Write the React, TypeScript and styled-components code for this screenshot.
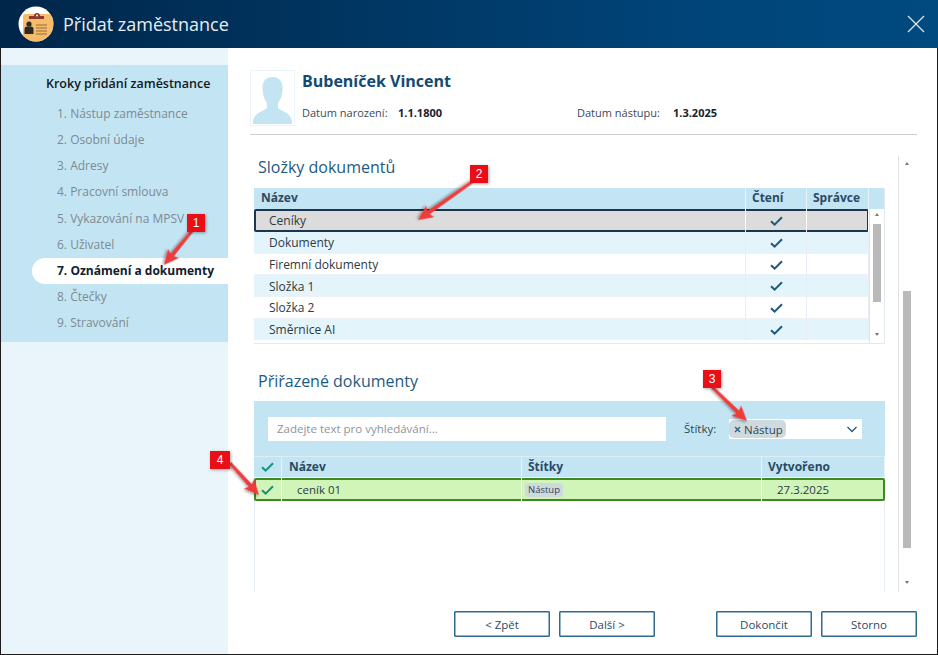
import React from "react";
import styled, { createGlobalStyle } from "styled-components";

const Global = createGlobalStyle`
  html, body { margin: 0; padding: 0; background: #fff; }
  body { font-family: "Open Sans", "Noto Sans", sans-serif; }
  * { box-sizing: border-box; }
`;

const Win = styled.div`
  position: relative;
  width: 938px;
  height: 655px;
  display: flex;
  flex-direction: column;
  background: #fff;
  overflow: hidden;
`;
const Header = styled.header`
  height: 48px;
  flex: none;
  display: flex;
  align-items: center;
  padding: 0 12px 0 18px;
  background: linear-gradient(90deg, #00264a 0%, #003560 35%, #00457a 75%, #004a80 100%);
`;
const Title = styled.h1`
  margin: 0 0 0 9px;
  flex: 1;
  font-size: 18px;
  font-weight: 400;
  color: #e6edf2;
`;
const Body = styled.div`
  flex: 1;
  display: flex;
  min-height: 0;
  border: solid #1c1c1c;
  border-width: 0 1px 1px 1px;
`;
const Sidebar = styled.aside`
  width: 227px;
  flex: none;
  padding-top: 17px;
  background: #eaf5fb;
`;
const StepPanel = styled.nav`
  height: 277px;
  padding-top: 10px;
  background: #c3e5f3;
`;
const StepHeading = styled.div`
  margin: 0 0 8px 45px;
  height: 18px;
  line-height: 18px;
  font-size: 12.5px;
  font-weight: 600;
  color: #111a22;
`;
const Step = styled.div<{ $active?: boolean }>`
  height: 26.15px;
  line-height: 26px;
  margin-left: 31px;
  padding-left: 25px;
  border-radius: 13px 0 0 13px;
  font-size: 12px;
  white-space: nowrap;
  font-weight: ${(p) => (p.$active ? 700 : 400)};
  color: ${(p) => (p.$active ? "#10202e" : "#7d8a92")};
  background: ${(p) => (p.$active ? "#fff" : "transparent")};
`;
const Main = styled.main`
  flex: 1;
  min-width: 0;
  display: flex;
  flex-direction: column;
  padding: 22px 20px 17px 22px;
`;
const Person = styled.section`
  height: 65px;
  flex: none;
  display: flex;
  gap: 7px;
  border-bottom: 1px solid #cfcfcf;
  padding-bottom: 9px;
`;
const Avatar = styled.div`
  width: 45px;
  height: 56px;
  border: 1px solid #eaf4fa;
  display: flex;
  align-items: flex-end;
  justify-content: center;
`;
const PersonInfo = styled.div`
  flex: 1;
  display: flex;
  flex-direction: column;
`;
const Name = styled.div`
  height: 22px;
  line-height: 22px;
  font-size: 16px;
  font-weight: 700;
  color: #124a73;
`;
const Dates = styled.div`
  margin-top: 11px;
  display: flex;
  height: 20px;
  line-height: 20px;
  font-size: 11px;
  color: #3c4a55;
`;
const DateGroup = styled.div<{ $w: number }>`
  width: ${(p) => p.$w}px;
  display: flex;
`;
const DateLabel = styled.span<{ $w: number }>`
  width: ${(p) => p.$w}px;
  flex: none;
`;
const DateValue = styled.b`
  font-weight: 700;
  color: #16222c;
`;
const Scroller = styled.div`
  flex: none;
  height: 436px;
  margin: 21px 0 0 4px;
  display: flex;
`;
const Content = styled.div`
  width: 631px;
  flex: none;
  display: flex;
  flex-direction: column;
`;
const SectionTitle = styled.h2<{ $top: number; $bottom: number }>`
  margin: ${(p) => p.$top}px 0 ${(p) => p.$bottom}px 4px;
  height: 22px;
  line-height: 22px;
  font-size: 16px;
  font-weight: 400;
  color: #1d5a82;
`;
const FolderTable = styled.div`
  height: 156px;
  flex: none;
  display: flex;
  flex-direction: column;
  border: solid #e3e9f0;
  border-width: 0 1px 1px 0;
`;
const FolderHead = styled.div`
  height: 21px;
  flex: none;
  display: grid;
  grid-template-columns: 492px 61px 62px 1fr;
  background: #c3e5f3;
  font-size: 12px;
  font-weight: 700;
  line-height: 20px;
  color: #2b4a64;
`;
const HeadCell = styled.div<{ $pad: number }>`
  padding-left: ${(p) => p.$pad}px;
  border-right: 1px solid #e6f3f9;
  white-space: nowrap;
`;
const FolderBody = styled.div`
  flex: 1;
  display: flex;
  min-height: 0;
`;
const FolderRows = styled.div`
  width: 615px;
  flex: none;
`;
const FolderRow = styled.div<{ $sel?: boolean; $alt?: boolean }>`
  height: ${(p) => (p.$sel ? 23 : 21.7)}px;
  display: grid;
  grid-template-columns: 492px 61px 62px;
  font-size: 12px;
  line-height: ${(p) => (p.$sel ? 20 : 21)}px;
  color: #2c3a44;
  background: ${(p) => (p.$sel ? "#dcdcdc" : p.$alt ? "#e4f4fb" : "#fff")};
  box-shadow: ${(p) => (p.$sel ? "inset 0 0 0 2px #1c3550" : "inset 0 -1px 0 #eef1f6")};
  border-radius: ${(p) => (p.$sel ? "2px" : "0")};
`;
const Cell = styled.div<{ $pad?: number; $sel?: boolean }>`
  padding-left: ${(p) => p.$pad ?? 0}px;
  display: flex;
  align-items: center;
  justify-content: ${(p) => (p.$pad === undefined ? "center" : "flex-start")};
  border-right: 1px solid ${(p) => (p.$sel ? "#fff" : "#e8ecf4")};
`;
const MiniScroll = styled.div`
  flex: 1;
  display: flex;
  flex-direction: column;
  align-items: center;
  border-left: 1px solid #dfe5ec;
  padding-top: 4px;
`;
const Thumb = styled.div<{ $top: number; $h: number; $w: number }>`
  width: ${(p) => p.$w}px;
  height: ${(p) => p.$h}px;
  margin-top: ${(p) => p.$top}px;
  flex: none;
  background: #b9b9b9;
`;
const Arrow = styled.div<{ $down?: boolean; $top?: number }>`
  width: 0;
  height: 0;
  flex: none;
  margin-top: ${(p) => p.$top ?? 0}px;
  border-left: 2.5px solid transparent;
  border-right: 2.5px solid transparent;
  ${(p) => (p.$down ? "border-top: 3px solid #777;" : "border-bottom: 3px solid #777;")}
`;
const DocsPanel = styled.div`
  flex: 1;
  display: flex;
  flex-direction: column;
  border: solid #e6edf3;
  border-width: 0 1px;
`;
const FilterBar = styled.div`
  height: 55px;
  flex: none;
  display: flex;
  align-items: flex-start;
  padding: 16px 0 0 14px;
  background: #c3e5f3;
  margin: 0 -1px;
`;
const SearchBox = styled.div`
  width: 398px;
  height: 24px;
  line-height: 24px;
  background: #fff;
  padding-left: 9px;
  font-size: 11.5px;
  color: #8d959b;
`;
const FilterLabel = styled.span`
  margin: 2px 0 0 18px;
  width: 45px;
  font-size: 11.5px;
  line-height: 20px;
  color: #2f4656;
`;
const TagSelect = styled.div`
  width: 133px;
  height: 20px;
  margin-top: 2px;
  background: #fff;
  display: flex;
  align-items: center;
  justify-content: space-between;
  padding-right: 3px;
`;
const TagChip = styled.span`
  height: 18px;
  line-height: 17px;
  border-radius: 5px;
  background: #cfdadf;
  padding: 0 3px 0 5px;
  font-size: 11.5px;
  color: #2f4656;
  display: flex;
  align-items: center;
  gap: 3px;
`;
const DocsHead = styled.div`
  height: 21px;
  flex: none;
  margin: 0 -1px;
  display: grid;
  grid-template-columns: 28px 240px 240px 123px;
  background: #c3e5f3;
  border-top: 1px solid #dcedf6;
  font-size: 12px;
  font-weight: 700;
  line-height: 20px;
  color: #2b4a64;
`;
const DocCheckHead = styled.div`
  display: flex;
  align-items: center;
  justify-content: center;
  border-right: 1px solid #e6f3f9;
`;
const DocRow = styled.div`
  height: 23px;
  margin: 1px -1px 0;
  display: grid;
  grid-template-columns: 28px 240px 240px 123px;
  background: #d1f4b9;
  box-shadow: inset 0 0 0 2px #3f8a20;
  border-radius: 2px;
  font-size: 11.5px;
  line-height: 22px;
  color: #2c3a44;
`;
const DocCell = styled.div<{ $pad?: number }>`
  display: flex;
  align-items: center;
  justify-content: ${(p) => (p.$pad === undefined ? "center" : "flex-start")};
  padding-left: ${(p) => p.$pad ?? 0}px;
  border-right: 1px solid #fff;
  &:last-child { border-right: 0; }
`;
const RowTag = styled.span`
  height: 14px;
  line-height: 14px;
  padding: 0 3px;
  border-radius: 4px;
  background: #cdd9dd;
  font-size: 9.5px;
  color: #33444f;
`;
const OuterBar = styled.div`
  width: 13px;
  margin-left: 13px;
  flex: none;
  padding-left: 3px;
  border-left: 1px solid #e2e2e2;
  display: flex;
  flex-direction: column;
  align-items: center;
  padding-top: 6px;
`;
const Footer = styled.footer`
  flex: none;
  margin-top: 19px;
  display: flex;
  gap: 9px;
  justify-content: flex-end;
`;
const Btn = styled.button<{ $gap?: number }>`
  width: 96px;
  height: 26px;
  padding: 0;
  margin-right: ${(p) => p.$gap ?? 0}px;
  background: #fff;
  border: 1px solid #2f6b8e;
  box-shadow: inset 0 0 0 0.5px #2f6b8e;
  border-radius: 1px;
  font-family: inherit;
  font-size: 11.5px;
  color: #2b4a64;
`;
const CloseBtn = styled.div`
  width: 20px;
  height: 20px;
  display: flex;
`;
const Badge = styled.span<{ $x: number; $y: number; $w?: number }>`
  position: absolute;
  left: ${(p) => p.$x}px;
  top: ${(p) => p.$y}px;
  width: ${(p) => p.$w ?? 18}px;
  height: 18px;
  background: #e80f17;
  color: #fff;
  font-family: "Liberation Sans", Arial, sans-serif;
  font-size: 12px;
  line-height: 18px;
  text-align: center;
  box-shadow: 1px 1px 3px rgba(0, 0, 0, 0.35);
`;
const ArrowLayer = styled.svg`
  position: absolute;
  left: 0;
  top: 0;
  width: 938px;
  height: 655px;
  pointer-events: none;
`;

const Tick: React.FC<{ color?: string; w?: number }> = ({ color = "#1d5a82", w = 13 }) => (
  <svg width={w} height={w * 0.77} viewBox="0 0 13 10" fill="none">
    <path d="M1 5.2 L4.6 8.6 L12 1.2" stroke={color} strokeWidth="2" />
  </svg>
);

const Logo = () => (
  <svg width="36" height="36" viewBox="0 0 36 36">
    <defs>
      <clipPath id="lc"><circle cx="18" cy="18" r="17.5" /></clipPath>
    </defs>
    <circle cx="18" cy="18" r="17.5" fill="#fff" />
    <g clipPath="url(#lc)">
      <rect x="5" y="8" width="30" height="30" rx="2" fill="#f5bd6b" />
      <path d="M11 10 h5 a3 3 0 0 1 6 0 h4 v3 h-15z" fill="#8e3a2c" />
      <circle cx="19" cy="9.5" r="1" fill="#fff" />
      <circle cx="11" cy="18" r="2.6" fill="#2c2a28" />
      <path d="M6.5 28 v-5 q0-2.5 2.5-2.5 h4 q2.5 0 2.5 2.5 v5z" fill="#2c2a28" />
      <path d="M18 19h11M18 22h11M18 25h11M18 28h11" stroke="#9a6a3a" strokeWidth="1.2" />
    </g>
  </svg>
);

const Silhouette = () => (
  <svg width="41" height="50" viewBox="0 0 41 50">
    <path
      d="M20.5 2 C12.5 2 10 8 10.5 15 C11 21 12.5 25 15 28 L15 33 C10 37 2 38 1 46 L1 49 L40 49 L40 46 C39 38 31 37 26 33 L26 28 C28.5 25 30 21 30.5 15 C31 8 28.5 2 20.5 2 Z"
      fill="#c3e5f3"
    />
  </svg>
);

const steps = [
  "1. Nástup zaměstnance",
  "2. Osobní údaje",
  "3. Adresy",
  "4. Pracovní smlouva",
  "5. Vykazování na MPSV",
  "6. Uživatel",
  "7. Oznámení a dokumenty",
  "8. Čtečky",
  "9. Stravování",
];
const folders = ["Dokumenty", "Firemní dokumenty", "Složka 1", "Složka 2", "Směrnice AI"];

const arrows: [number, number, number, number][] = [
  [192, 231, 164, 265],
  [472, 182, 418, 220],
  [712, 387, 747, 421],
  [230, 463, 259, 495],
];

const ArrowShape: React.FC<{ a: [number, number, number, number] }> = ({ a: [x1, y1, x2, y2] }) => {
  const angle = Math.atan2(y2 - y1, x2 - x1);
  const deg = (angle * 180) / Math.PI;
  const len = Math.hypot(x2 - x1, y2 - y1);
  return (
    <g transform={`translate(${x1} ${y1}) rotate(${deg})`} filter="url(#as)">
      <path
        d={`M0 -1.5 L${len - 13} -2 L${len - 15} -7 L${len} 0 L${len - 15} 7 L${len - 13} 2 L0 1.5 Z`}
        fill="#ee3b3b"
      />
    </g>
  );
};

export default function App() {
  return (
    <Win>
      <Global />
      <Header>
        <Logo />
        <Title>Přidat zaměstnance</Title>
        <CloseBtn>
          <svg width="20" height="20" viewBox="0 0 20 20" stroke="#d8e3ea" strokeWidth="1.3">
            <path d="M2 2 L18 18 M18 2 L2 18" />
          </svg>
        </CloseBtn>
      </Header>
      <Body>
        <Sidebar>
          <StepPanel>
            <StepHeading>Kroky přidání zaměstnance</StepHeading>
            {steps.map((s, i) => (
              <Step key={s} $active={i === 6}>{s}</Step>
            ))}
          </StepPanel>
        </Sidebar>
        <Main>
          <Person>
            <Avatar><Silhouette /></Avatar>
            <PersonInfo>
              <Name>Bubeníček Vincent</Name>
              <Dates>
                <DateGroup $w={275}>
                  <DateLabel $w={96}>Datum narození:</DateLabel>
                  <DateValue>1.1.1800</DateValue>
                </DateGroup>
                <DateGroup $w={200}>
                  <DateLabel $w={96}>Datum nástupu:</DateLabel>
                  <DateValue>1.3.2025</DateValue>
                </DateGroup>
              </Dates>
            </PersonInfo>
          </Person>
          <Scroller>
            <Content>
              <SectionTitle $top={0} $bottom={10}>Složky dokumentů</SectionTitle>
              <FolderTable>
                <FolderHead>
                  <HeadCell $pad={7}>Název</HeadCell>
                  <HeadCell $pad={6}>Čtení</HeadCell>
                  <HeadCell $pad={6}>Správce</HeadCell>
                </FolderHead>
                <FolderBody>
                  <FolderRows>
                    <FolderRow $sel>
                      <Cell $pad={15} $sel>Ceníky</Cell>
                      <Cell $sel><Tick /></Cell>
                      <Cell $sel />
                    </FolderRow>
                    {folders.map((f, i) => (
                      <FolderRow key={f} $alt={i % 2 === 0}>
                        <Cell $pad={15}>{f}</Cell>
                        <Cell><Tick /></Cell>
                        <Cell />
                      </FolderRow>
                    ))}
                  </FolderRows>
                  <MiniScroll>
                    <Arrow />
                    <Thumb $top={8} $h={78} $w={8} />
                    <Arrow $down $top={31} />
                  </MiniScroll>
                </FolderBody>
              </FolderTable>
              <SectionTitle $top={26} $bottom={9}>Přiřazené dokumenty</SectionTitle>
              <DocsPanel>
                <FilterBar>
                  <SearchBox>Zadejte text pro vyhledávání...</SearchBox>
                  <FilterLabel>Štítky:</FilterLabel>
                  <TagSelect>
                    <TagChip>
                      <svg width="7" height="7" viewBox="0 0 7 7" stroke="#2f5a7a" strokeWidth="1.3">
                        <path d="M1 1 L6 6 M6 1 L1 6" />
                      </svg>
                      Nástup
                    </TagChip>
                    <svg width="14" height="14" viewBox="0 0 14 14" fill="none" stroke="#2f5a7a" strokeWidth="1.4">
                      <path d="M2.5 5 L7 9.5 L11.5 5" />
                    </svg>
                  </TagSelect>
                </FilterBar>
                <DocsHead>
                  <DocCheckHead><Tick color="#12937a" /></DocCheckHead>
                  <HeadCell $pad={7}>Název</HeadCell>
                  <HeadCell $pad={6}>Štítky</HeadCell>
                  <HeadCell $pad={6}>Vytvořeno</HeadCell>
                </DocsHead>
                <DocRow>
                  <DocCell><Tick color="#12937a" /></DocCell>
                  <DocCell $pad={15}>ceník 01</DocCell>
                  <DocCell $pad={3}><RowTag>Nástup</RowTag></DocCell>
                  <DocCell $pad={15}>27.3.2025</DocCell>
                </DocRow>
              </DocsPanel>
            </Content>
            <OuterBar>
              <Arrow />
              <Thumb $top={126} $h={257} $w={8} />
              <Arrow $down $top={33} />
            </OuterBar>
          </Scroller>
          <Footer>
            <Btn>&lt; Zpět</Btn>
            <Btn $gap={52}>Další &gt;</Btn>
            <Btn>Dokončit</Btn>
            <Btn>Storno</Btn>
          </Footer>
        </Main>
      </Body>
      <ArrowLayer viewBox="0 0 938 655">
        <defs>
          <filter id="as" x="-30%" y="-30%" width="160%" height="160%">
            <feDropShadow dx="1" dy="1.5" stdDeviation="1.2" floodColor="#000" floodOpacity="0.35" />
          </filter>
        </defs>
        {arrows.map((a) => (
          <ArrowShape key={a[0]} a={a} />
        ))}
      </ArrowLayer>
      <Badge $x={187} $y={214}>1</Badge>
      <Badge $x={470} $y={165}>2</Badge>
      <Badge $x={703} $y={370}>3</Badge>
      <Badge $x={210} $y={451} $w={20}>4</Badge>
    </Win>
  );
}
